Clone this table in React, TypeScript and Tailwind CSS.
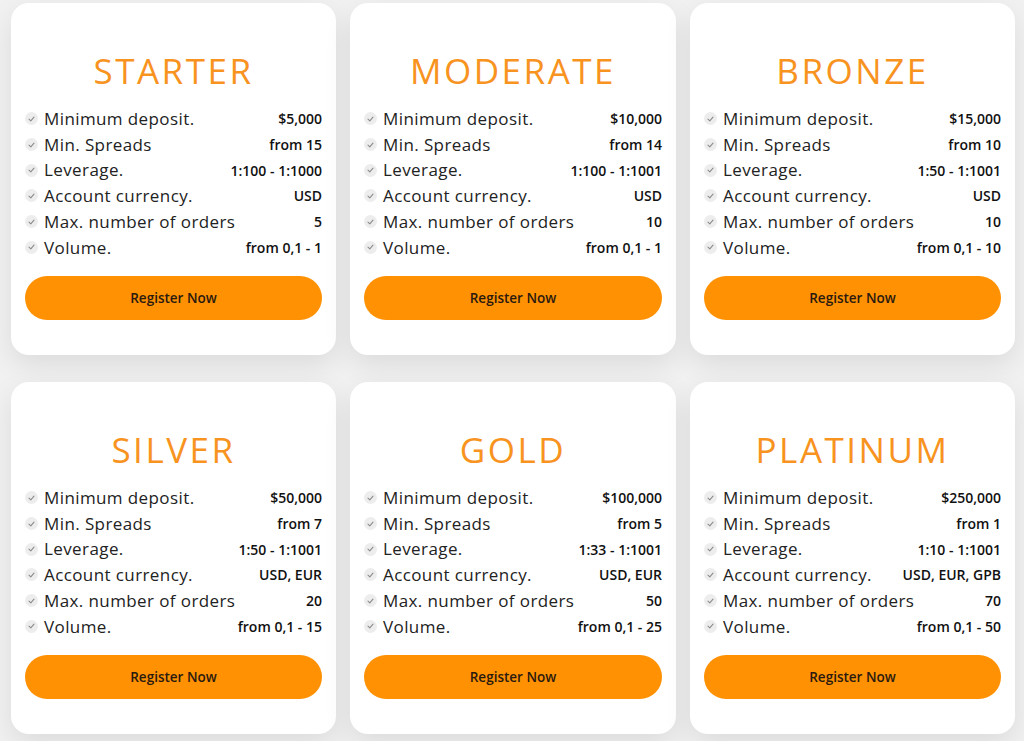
const plans = [
  {
    name: "STARTER",
    rows: ["$5,000", "from 15", "1:100 - 1:1000", "USD", "5", "from 0,1 - 1"],
  },
  {
    name: "MODERATE",
    rows: ["$10,000", "from 14", "1:100 - 1:1001", "USD", "10", "from 0,1 - 1"],
  },
  {
    name: "BRONZE",
    rows: ["$15,000", "from 10", "1:50 - 1:1001", "USD", "10", "from 0,1 - 10"],
  },
  {
    name: "SILVER",
    rows: ["$50,000", "from 7", "1:50 - 1:1001", "USD, EUR", "20", "from 0,1 - 15"],
  },
  {
    name: "GOLD",
    rows: ["$100,000", "from 5", "1:33 - 1:1001", "USD, EUR", "50", "from 0,1 - 25"],
  },
  {
    name: "PLATINUM",
    rows: ["$250,000", "from 1", "1:10 - 1:1001", "USD, EUR, GPB", "70", "from 0,1 - 50"],
  },
];

const labels = [
  "Minimum deposit.",
  "Min. Spreads",
  "Leverage.",
  "Account currency.",
  "Max. number of orders",
  "Volume.",
];

function Check() {
  return (
    <span className="flex h-[13px] w-[13px] shrink-0 items-center justify-center rounded-full bg-[#ededed]">
      <svg width="7" height="6" viewBox="0 0 7 6" fill="none">
        <path d="M1 3.2 L2.8 4.8 L6 1.2" stroke="#8a8a8a" strokeWidth="1.1" strokeLinecap="round" strokeLinejoin="round" />
      </svg>
    </span>
  );
}

function PlanCard({ name, rows }: { name: string; rows: string[] }) {
  return (
    <div className="flex h-[352px] flex-col rounded-[18px] bg-white px-[14px] pt-[50px] shadow-[0_10px_28px_rgba(0,0,0,0.09)]">
      <h2 className="text-center text-[35px] font-medium leading-[35px] tracking-[2.5px] text-[#f7931e]">{name}</h2>
      <ul className="mt-[18px] flex flex-col">
        {labels.map((label, i) => (
          <li key={label} className="flex h-[25.7px] items-center">
            <Check />
            <span className="ml-[6px] text-[17px] tracking-[0.4px] text-[#222]">{label}</span>
            <span className="ml-auto text-[14px] font-semibold text-[#111]">{rows[i]}</span>
          </li>
        ))}
      </ul>
      <button className="mt-[16px] h-[44px] w-full rounded-full bg-[#ff9102] text-[13.5px] font-semibold text-[#2a1a10]">
        Register Now
      </button>
    </div>
  );
}

export default function App() {
  return (
    <main className="min-h-screen bg-[#f1f1f1] pt-[3px] font-['Open_Sans',sans-serif]">
      <div className="grid grid-cols-[325px_326px_325px] gap-x-[14px] gap-y-[27px] pl-[11px]">
        {plans.map((p) => (
          <PlanCard key={p.name} name={p.name} rows={p.rows} />
        ))}
      </div>
    </main>
  );
}
